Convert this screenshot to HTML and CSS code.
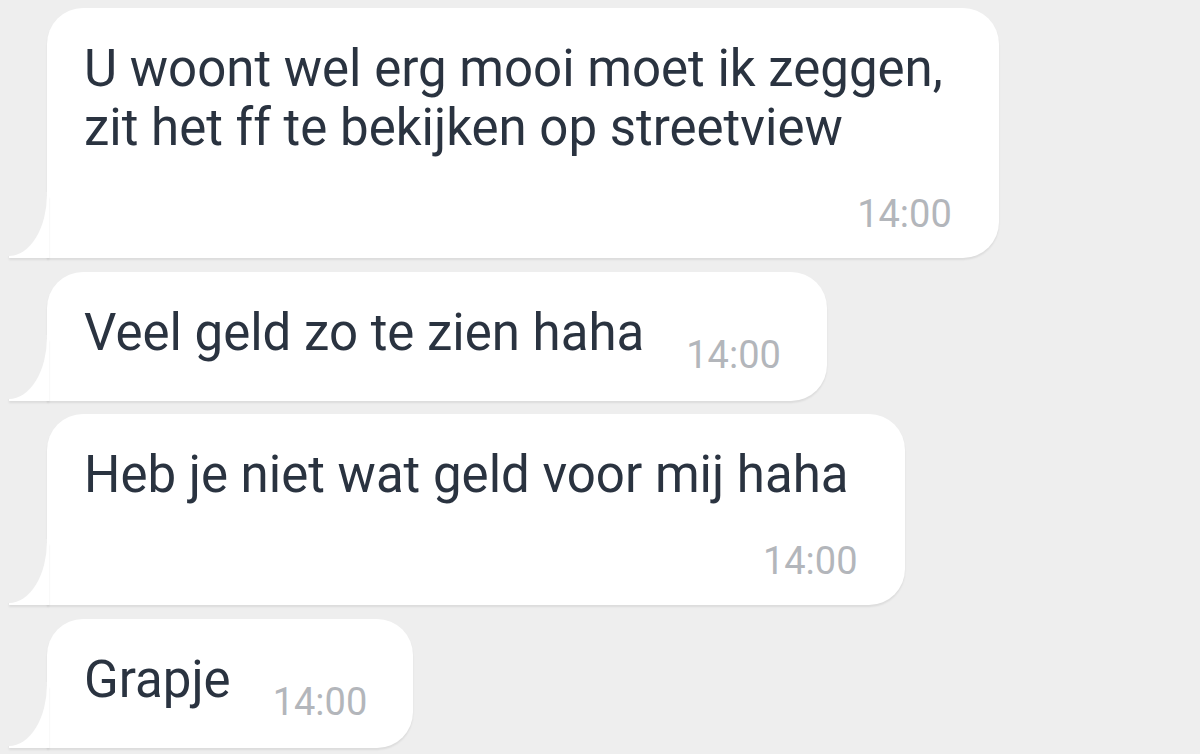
FILE: index.html
```html
<!DOCTYPE html>
<html lang="nl">
<head>
<meta charset="utf-8">
<title>Chat</title>
<link rel="stylesheet" href="styles.css">
</head>
<body>
<div class="chat">
  <div class="bubble stacked">
    <p class="text">U woont wel erg mooi moet ik zeggen,<br>zit het ff te bekijken op streetview</p>
    <span class="time">14:00</span>
  </div>
  <div class="bubble inline">
    <p class="text">Veel geld zo te zien haha</p>
    <span class="time">14:00</span>
  </div>
  <div class="bubble stacked">
    <p class="text">Heb je niet wat geld voor mij haha</p>
    <span class="time">14:00</span>
  </div>
  <div class="bubble inline">
    <p class="text">Grapje</p>
    <span class="time">14:00</span>
  </div>
</div>
</body>
</html>
```

FILE: styles.css
```css
* { box-sizing: border-box; }
html, body {
  margin: 0;
  padding: 0;
  background: #eeeeee;
  height: 754px;
  overflow: hidden;
}
.chat {
  display: flex;
  flex-direction: column;
  align-items: flex-start;
  gap: 13.5px;
  padding: 8px 0 0 47px;
  font-family: Roboto, "Noto Sans", sans-serif;
}
.bubble {
  position: relative;
  background: #ffffff;
  border-radius: 36px 36px 36px 0;
  box-shadow: 0 2px 2px rgba(0, 0, 0, 0.08);
  padding: 31px 47px 24px 37px;
}
.bubble::before {
  content: "";
  position: absolute;
  left: -38px;
  bottom: 0;
  width: 40px;
  height: 62px;
  background: #ffffff;
  box-shadow: 0 2px 2px rgba(0, 0, 0, 0.08);
}
.bubble::after {
  content: "";
  position: absolute;
  left: -40px;
  bottom: 2px;
  width: 40px;
  height: 64px;
  background: #eeeeee;
  border-bottom-right-radius: 38px 62px;
}
.text {
  margin: 0;
  font-size: 51px;
  line-height: 59px;
  color: #2a3340;
  white-space: nowrap;
}
.time {
  font-size: 38px;
  line-height: 40px;
  color: #b3b6bb;
  white-space: nowrap;
}
.stacked {
  display: flex;
  flex-direction: column;
  padding-right: 56px;
}
.stacked .time {
  align-self: flex-end;
  margin-top: 37px;
  margin-right: -9px;
}
.inline {
  display: flex;
  align-items: flex-start;
  gap: 42px;
  padding-bottom: 26px;
  padding-right: 46px;
}
.inline .time {
  margin-top: 32px;
}
```
